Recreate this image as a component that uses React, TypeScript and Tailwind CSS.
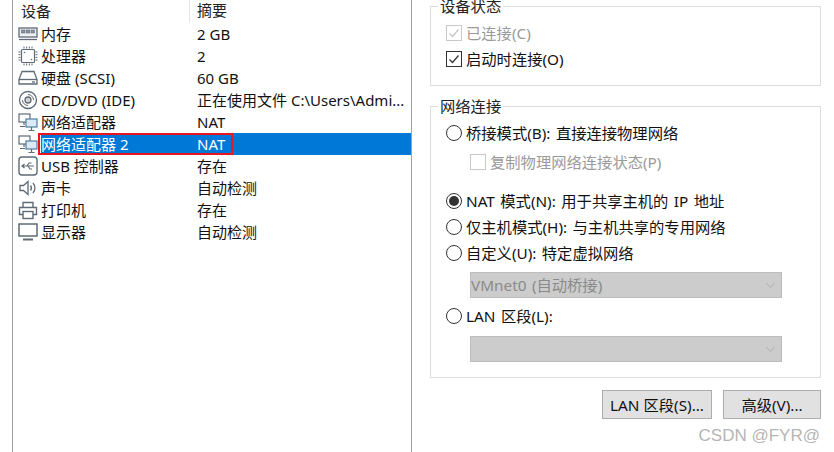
import type { ReactNode } from "react";
import { ChevronDown } from "lucide-react";

const stroke = "#5f6b76";

const MemoryIcon = () => (
    <svg width="20" height="16" viewBox="0 0 20 16" fill="none" stroke={stroke} strokeWidth="1.3">
        <rect x="1" y="2" width="18" height="9" fill="#eef1f3" />
        <rect x="3.5" y="4" width="3.5" height="3" fill="#8b959e" strokeWidth="0.6" />
        <rect x="8.2" y="4" width="3.5" height="3" fill="#8b959e" strokeWidth="0.6" />
        <rect x="13" y="4" width="3.5" height="3" fill="#8b959e" strokeWidth="0.6" />
        <path d="M1 13.5h18" />
    </svg>
);

const CpuIcon = () => (
    <svg width="20" height="20" viewBox="0 0 20 20" fill="none" stroke={stroke} strokeWidth="1.2">
        <rect x="3.5" y="3.5" width="13" height="13" rx="1" />
        <path d="M6 0.5v2M8.7 0.5v2M11.4 0.5v2M14 0.5v2M6 17.5v2M8.7 17.5v2M11.4 17.5v2M14 17.5v2M0.5 6h2M0.5 8.7h2M0.5 11.4h2M0.5 14h2M17.5 6h2M17.5 8.7h2M17.5 11.4h2M17.5 14h2" strokeWidth="1" />
        <circle cx="6.5" cy="6.5" r="0.8" fill={stroke} stroke="none" />
        <circle cx="13.5" cy="13.5" r="0.8" fill={stroke} stroke="none" />
    </svg>
);

const DiskIcon = () => (
    <svg width="20" height="16" viewBox="0 0 20 16" fill="none" stroke={stroke} strokeWidth="1.3">
        <path d="M4 1.5h12l3 8v4.5H1V9.500z" />
        <path d="M1 9.500h18" />
        <path d="M14 12h3" />
    </svg>
);

const CdIcon = () => (
    <svg width="20" height="20" viewBox="0 0 20 20" fill="none" stroke={stroke} strokeWidth="1.3">
        <circle cx="10" cy="10" r="8.500" />
        <circle cx="10" cy="10" r="3" fill="#cfd4d8" />
        <path d="M10 4.500a5.500 5.500 0 0 1 5.500 5.500" strokeWidth="1" />
        <path d="M10 15.500a5.500 5.500 0 0 1-5.500-5.500" strokeWidth="1" />
    </svg>
);

const NetworkIcon = () => (
    <svg width="20" height="19" viewBox="0 0 20 19" fill="none" stroke={stroke} strokeWidth="1.2">
        <rect x="1" y="1" width="11" height="8" fill="#fff" />
        <rect x="8" y="6" width="11" height="8" fill="#dbe9f5" stroke="#4f7f9f" />
        <path d="M13.500 14v3M10.500 17.500h6M6 9v3M2 13.500h5" />
    </svg>
);

const UsbIcon = () => (
    <svg width="20" height="20" viewBox="0 0 20 20" fill="none" stroke={stroke} strokeWidth="1.2">
        <rect x="1" y="1" width="18" height="18" rx="3" strokeWidth="1.4" />
        <path d="M4 10h12M6.500 8 4 10l2.500 2M9 10l2-3h2.500M10 10l2 3h2" />
    </svg>
);

const SpeakerIcon = () => (
    <svg width="20" height="18" viewBox="0 0 20 18" fill="none" stroke={stroke} strokeWidth="1.3">
        <path d="M2 6.500h3.500L10 2.500v13l-4.500-4H2z" />
        <path d="M12.500 6.500a4 4 0 0 1 0 5M15 4a7.500 7.500 0 0 1 0 10" />
    </svg>
);

const PrinterIcon = () => (
    <svg width="20" height="19" viewBox="0 0 20 19" fill="none" stroke={stroke} strokeWidth="1.4">
        <path d="M5 6V1.500h10V6" />
        <path d="M5 13.500H1.500V6.500h17v7H15" />
        <rect x="5" y="10.500" width="10" height="7" />
    </svg>
);

const MonitorIcon = () => (
    <svg width="20" height="18" viewBox="0 0 20 18" fill="none" stroke={stroke} strokeWidth="1.5">
        <rect x="1" y="1" width="18" height="12" fill="#fff" />
        <path d="M5 16.500h10" strokeWidth="2" />
    </svg>
);

const devices: { icon: ReactNode; name: string; summary: string; selected?: boolean }[] = [
    { icon: <MemoryIcon />, name: "内存", summary: "2 GB" },
    { icon: <CpuIcon />, name: "处理器", summary: "2" },
    { icon: <DiskIcon />, name: "硬盘 (SCSI)", summary: "60 GB" },
    { icon: <CdIcon />, name: "CD/DVD (IDE)", summary: "正在使用文件 C:\\Users\\Admi..." },
    { icon: <NetworkIcon />, name: "网络适配器", summary: "NAT" },
    { icon: <NetworkIcon />, name: "网络适配器 2", summary: "NAT", selected: true },
    { icon: <UsbIcon />, name: "USB 控制器", summary: "存在" },
    { icon: <SpeakerIcon />, name: "声卡", summary: "自动检测" },
    { icon: <PrinterIcon />, name: "打印机", summary: "存在" },
    { icon: <MonitorIcon />, name: "显示器", summary: "自动检测" },
];

const CheckBox = ({ checked, disabled }: { checked?: boolean; disabled?: boolean }) => (
    <span
        className={`flex h-[16px] w-[16px] shrink-0 items-center justify-center border ${
            disabled ? "border-[#c8c8c8]" : "border-[#333333]"
        }`}
    >
        {checked && (
            <svg width="12" height="12" viewBox="0 0 12 12" fill="none" stroke={disabled ? "#c4c4c4" : "#333333"} strokeWidth="1.2">
                <path d="M1.500 6.500 4.500 9.500 10.500 2.500" />
            </svg>
        )}
    </span>
);

const Radio = ({ checked }: { checked?: boolean }) => (
    <span className="flex h-[16px] w-[16px] shrink-0 items-center justify-center rounded-full border border-[#333333]">
        {checked && <span className="h-[10px] w-[10px] rounded-full bg-[#333333]" />}
    </span>
);

const RadioRow = ({ checked, children }: { checked?: boolean; children: ReactNode }) => (
    <div className="flex h-[26px] items-center gap-[4px] text-[#111111]">
        <Radio checked={checked} />
        <span>{children}</span>
    </div>
);

const DisabledSelect = ({ label }: { label?: string }) => (
    <div className="ml-[24px] flex h-[26px] w-[312px] items-center justify-between border border-[#bdbdbd] bg-[#cccccc] pl-[0px] pr-[3px] text-[#8a8a8a]">
        <span>{label}</span>
        <ChevronDown size={15} strokeWidth={1} color="#9a9a9a" />
    </div>
);

export default function App() {
    return (
        <div
            className="flex h-[452px] w-[834px] overflow-hidden bg-white text-[15px] leading-[20px]"
            style={{ fontFamily: '"Noto Sans", "Noto Sans CJK SC", sans-serif' }}
        >
            {/* Device list */}
            <div className="ml-[12px] h-full w-[400px] shrink-0 border-x border-[#a0a0a0]">
                <div className="flex h-[23px] items-center pb-[1px] text-[#222222]">
                    <span className="w-[176px] pl-[8px]">设备</span>
                    <span className="h-[23px] border-l border-[#e5e5e5] pl-[7px]">摘要</span>
                </div>
                {devices.map((d) => (
                    <div
                        key={d.name}
                        className={`flex h-[22px] items-center ${
                            d.selected ? "bg-[#0078d7] text-white" : "text-[#111111]"
                        }`}
                    >
                        <span className={`flex h-full w-[28px] shrink-0 items-center justify-center pl-[1px] ${d.selected ? "bg-white" : ""}`}>
                            {d.icon}
                        </span>
                        <span className="flex h-full w-[148px] shrink-0 items-center">{d.name}</span>
                        <span className="whitespace-nowrap pl-[8px]">{d.summary}</span>
                    </div>
                ))}
            </div>

            {/* Settings */}
            <div className="ml-[18px] flex w-[391px] shrink-0 flex-col text-[15.3px] [word-spacing:1.5px]">
                <fieldset className="-mt-[4px] h-[90px] border border-[#dcdcdc] pl-[15px] pt-[4px]">
                    <legend className="-ml-[8px] px-[2px] text-[#222222]">设备状态</legend>
                    <div className="flex h-[26px] items-center gap-[4px] text-[#9a9a9a]">
                        <CheckBox checked disabled />
                        <span>已连接(C)</span>
                    </div>
                    <div className="flex h-[26px] items-center gap-[4px] text-[#111111]">
                        <CheckBox checked />
                        <span>启动时连接(O)</span>
                    </div>
                </fieldset>

                <fieldset className="mt-[10px] h-[282px] border border-[#dcdcdc] pl-[15px]">
                    <legend className="-ml-[8px] px-[2px] text-[#222222]">网络连接</legend>
                    <div className="mt-[4px]">
                        <RadioRow>桥接模式(B): 直接连接物理网络</RadioRow>
                    </div>
                    <div className="ml-[24px] mt-[3px] flex h-[26px] items-center gap-[4px] text-[#9a9a9a]">
                        <CheckBox disabled />
                        <span>复制物理网络连接状态(P)</span>
                    </div>
                    <div className="mt-[13px]">
                        <RadioRow checked>NAT 模式(N): 用于共享主机的 IP 地址</RadioRow>
                        <RadioRow>仅主机模式(H): 与主机共享的专用网络</RadioRow>
                        <RadioRow>自定义(U): 特定虚拟网络</RadioRow>
                    </div>
                    <div className="mt-[6px]">
                        <DisabledSelect label="VMnet0 (自动桥接)" />
                    </div>
                    <div className="mt-[5px]">
                        <RadioRow>LAN 区段(L):</RadioRow>
                    </div>
                    <div className="mt-[7px]">
                        <DisabledSelect />
                    </div>
                </fieldset>

                <div className="mt-[12px] flex justify-end gap-[11px] text-[#111111]">
                    <button className="h-[29px] w-[110px] border border-[#adadad] bg-[#e1e1e1]">LAN 区段(S)...</button>
                    <button className="h-[29px] w-[98px] border border-[#adadad] bg-[#e1e1e1]">高级(V)...</button>
                </div>
                <div className="mt-[7px] pr-[1px] text-right text-[17px] leading-[20px] text-[#b5b5b5] [word-spacing:0px]" style={{ fontFamily: '"Liberation Sans", sans-serif' }}>
                    CSDN @FYR@
                </div>
            </div>

            {/* Highlight around the selected row name */}
            <div className="absolute left-[38px] top-[133px] h-[22px] w-[195px] border-2 border-[#e8141f]" />
        </div>
    );
}
